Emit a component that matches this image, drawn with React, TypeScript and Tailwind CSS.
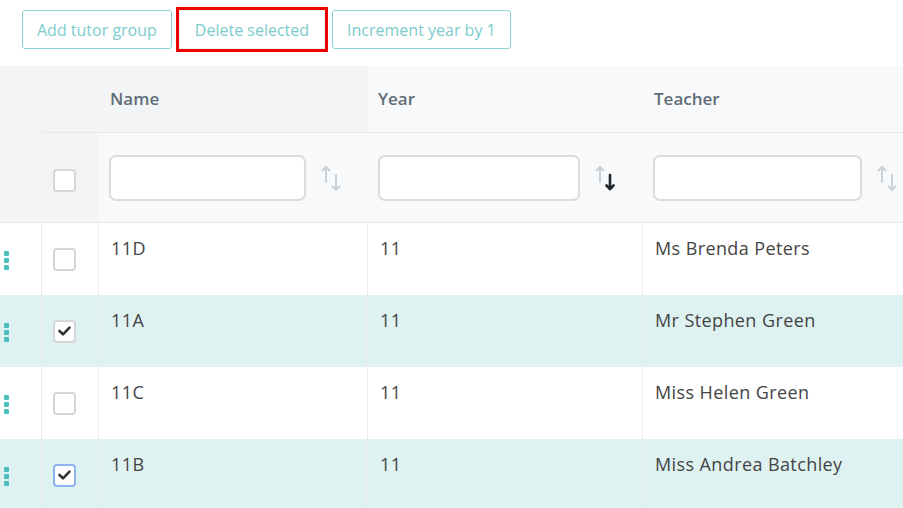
import React from "react";

interface TutorGroup {
  name: string;
  year: number;
  teacher: string;
  selected: boolean;
  focused?: boolean;
}

const groups: TutorGroup[] = [
  { name: "11D", year: 11, teacher: "Ms Brenda Peters", selected: false },
  { name: "11A", year: 11, teacher: "Mr Stephen Green", selected: true },
  { name: "11C", year: 11, teacher: "Miss Helen Green", selected: false },
  { name: "11B", year: 11, teacher: "Miss Andrea Batchley", selected: true, focused: true },
];

const SortIcon: React.FC<{ active?: boolean }> = ({ active }) => (
  <svg width="22" height="28" viewBox="0 0 22 28" fill="none">
    <g stroke="#c9d1d6" strokeWidth="2" strokeLinecap="round" strokeLinejoin="round">
      <path d="M5 3 L5 18" />
      <path d="M1.5 6.5 L5 3 L8.5 6.5" />
    </g>
    {active ? (
      <g stroke="#1f2529" strokeWidth="2.6" strokeLinecap="round" strokeLinejoin="round">
        <path d="M15 11 L15 25" />
        <path d="M11.5 21.5 L15 25 L18.5 21.5" />
      </g>
    ) : (
      <g stroke="#c9d1d6" strokeWidth="2" strokeLinecap="round" strokeLinejoin="round">
        <path d="M15 11 L15 26" />
        <path d="M11.5 22.5 L15 26 L18.5 22.5" />
      </g>
    )}
  </svg>
);

const Checkbox: React.FC<{ checked?: boolean; focused?: boolean }> = ({ checked, focused }) => (
  <div
    className={`w-[23px] h-[23px] rounded-[4px] bg-white flex items-center justify-center ${
      focused ? "border-2 border-[#8fb2f0]" : "border-2 border-[#d6d6d6]"
    }`}
  >
    {checked ? (
      <svg width="13" height="10" viewBox="0 0 13 10">
        <path d="M1.5 5 L5 8.3 L11.5 1.7" stroke="#333" strokeWidth="2.6" fill="none" strokeLinecap="round" strokeLinejoin="round" />
      </svg>
    ) : null}
  </div>
);

const DragHandle = () => (
  <div className="flex flex-col gap-[2px]">
    <div className="w-[5px] h-[5px] bg-[#4fbebe] rounded-[1px]" />
    <div className="w-[5px] h-[5px] bg-[#4fbebe] rounded-[1px]" />
    <div className="w-[5px] h-[5px] bg-[#4fbebe] rounded-[1px]" />
  </div>
);

const ToolButton: React.FC<{ label: string; highlighted?: boolean }> = ({ label, highlighted }) =>
  highlighted ? (
    <div className="border-[3px] border-[#f00000]">
      <button className="h-[39px] px-[15px] border border-[#e3f3f3] bg-white text-[16px] text-[#7ccccc]">
        {label}
      </button>
    </div>
  ) : (
    <button className="h-[39px] px-[14px] border border-[#8dd3d3] rounded-[3px] bg-white text-[16px] text-[#7ccccc]">
      {label}
    </button>
  );

const FilterCell: React.FC<{ width: string; active?: boolean }> = ({ width, active }) => (
  <div className="flex items-center pl-[10px] gap-[15px]">
    <div className={`${width} h-[46px] bg-white border-2 border-[#dadcdd] rounded-[7px]`} />
    <SortIcon active={active} />
  </div>
);

export default function App() {
  return (
    <div className="w-[903px] h-[508px] overflow-hidden bg-white font-['Open_Sans',sans-serif]">
      <div className="flex items-center gap-[4px] pl-[22px] mt-[7px] h-[45px]">
        <ToolButton label="Add tutor group" />
        <ToolButton label="Delete selected" highlighted />
        <ToolButton label="Increment year by 1" />
      </div>

      <div className="mt-[14px] grid grid-cols-[42px_57px_269px_275px_1fr]">
        {/* header titles */}
        <div className="h-[67px] bg-[#f2f4f5]" />
        <div className="h-[67px] bg-[#f2f4f5] border-b border-[#e6e9ea]" />
        <div className="h-[67px] bg-[#f2f4f5] border-b border-[#e6e9ea] flex items-center pl-[11px] text-[17px] font-semibold text-[#5f6e78]">
          Name
        </div>
        <div className="h-[67px] bg-[#f8f9fa] border-b border-[#e6e9ea] flex items-center pl-[10px] text-[17px] font-semibold text-[#5f6e78]">
          Year
        </div>
        <div className="h-[67px] bg-[#f8f9fa] border-b border-[#e6e9ea] flex items-center pl-[11px] text-[17px] font-semibold text-[#5f6e78]">
          Teacher
        </div>

        {/* filters */}
        <div className="h-[90px] bg-[#f2f4f5] border-b border-[#e6e9ea]" />
        <div className="h-[90px] bg-[#f2f4f5] border-b border-[#e6e9ea] flex items-center pl-[11px] pt-[6px]">
          <Checkbox />
        </div>
        <div className="h-[90px] bg-[#f8f9fa] border-b border-[#e6e9ea]">
          <div className="h-full flex items-center">
            <FilterCell width="w-[197px]" />
          </div>
        </div>
        <div className="h-[90px] bg-[#f8f9fa] border-b border-[#e6e9ea]">
          <div className="h-full flex items-center">
            <FilterCell width="w-[202px]" active />
          </div>
        </div>
        <div className="h-[90px] bg-[#f8f9fa] border-b border-[#e6e9ea]">
          <div className="h-full flex items-center">
            <FilterCell width="w-[209px]" />
          </div>
        </div>

        {/* rows */}
        {groups.map((g, i) => {
          const bg = i % 2 === 1 ? "bg-[#dff2f2]" : "bg-white";
          return (
            <React.Fragment key={g.name}>
              <div className={`h-[72px] ${bg} border-r border-[#ebebeb] flex items-center pl-[4px] pt-[2px]`}>
                <DragHandle />
              </div>
              <div className={`h-[72px] ${bg} border-r border-[#ebebeb] flex items-center pl-[11px]`}>
                <Checkbox checked={g.selected} focused={g.focused} />
              </div>
              <div className={`h-[72px] ${bg} border-r border-[#ebebeb] pl-[12px] pt-[12px] text-[18px] tracking-[0.4px] text-[#444]`}>
                {g.name}
              </div>
              <div className={`h-[72px] ${bg} border-r border-[#ebebeb] pl-[12px] pt-[12px] text-[18px] tracking-[0.4px] text-[#444]`}>
                {g.year}
              </div>
              <div className={`h-[72px] ${bg} pl-[12px] pt-[12px] text-[18px] tracking-[0.4px] text-[#444]`}>
                {g.teacher}
              </div>
            </React.Fragment>
          );
        })}
      </div>
    </div>
  );
}
